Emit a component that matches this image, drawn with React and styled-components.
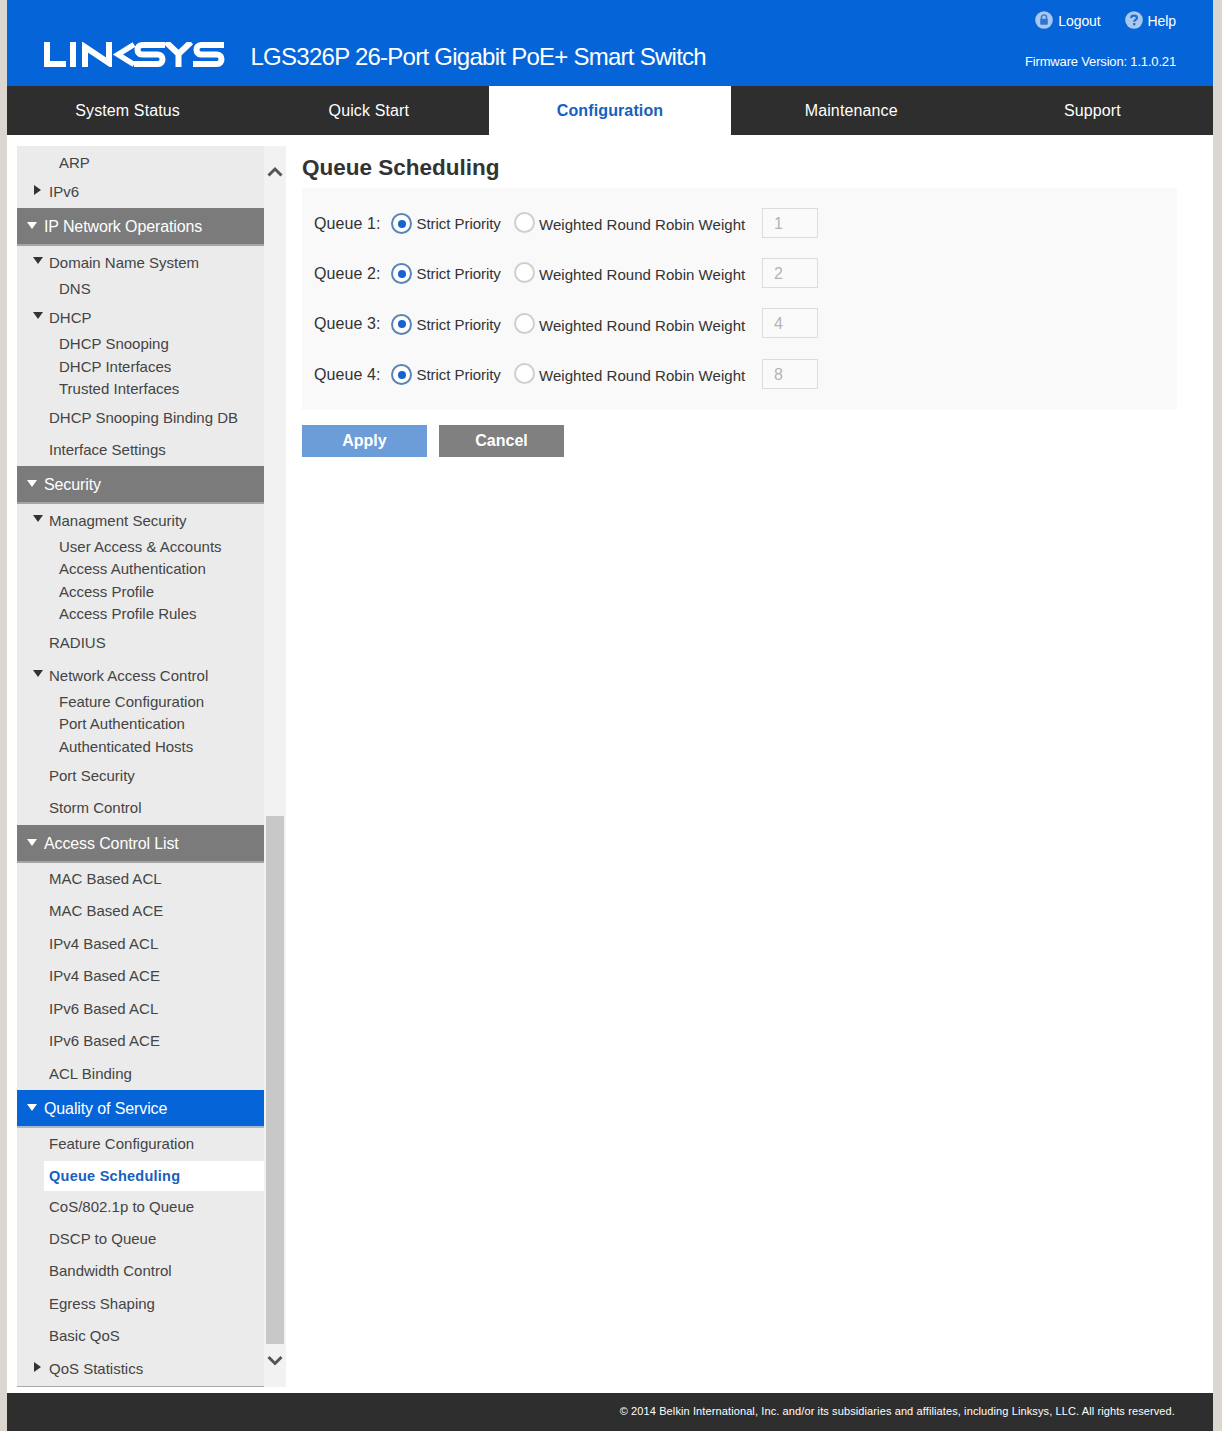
import React from "react";
import styled, { createGlobalStyle } from "styled-components";

const GlobalStyle = createGlobalStyle`
  html, body {
    margin: 0;
    padding: 0;
    background: #dbd7d0;
  }
  body {
    font-family: "Liberation Sans", Arial, sans-serif;
    color: #333;
  }
  * {
    box-sizing: border-box;
  }
`;

const tabs = ["System Status", "Quick Start", "Configuration", "Maintenance", "Support"];

// h = row height when it isn't the default, mt/mb nudge the rows around it
const menu = [
  { type: "sub", label: "ARP", h: 32 },
  { type: "leaf", label: "IPv6", arrow: "right", h: 26, mb: 4 },
  { type: "head", label: "IP Network Operations" },
  { type: "leaf", label: "Domain Name System", arrow: "down" },
  { type: "sub", label: "DNS", mt: -1, mb: 1 },
  { type: "leaf", label: "DHCP", arrow: "down" },
  { type: "sub", label: "DHCP Snooping", mt: -1 },
  { type: "sub", label: "DHCP Interfaces" },
  { type: "sub", label: "Trusted Interfaces", mb: 1 },
  { type: "leaf", label: "DHCP Snooping Binding DB" },
  { type: "leaf", label: "Interface Settings" },
  { type: "head", label: "Security" },
  { type: "leaf", label: "Managment Security", arrow: "down" },
  { type: "sub", label: "User Access & Accounts", mt: -1.5 },
  { type: "sub", label: "Access Authentication" },
  { type: "sub", label: "Access Profile" },
  { type: "sub", label: "Access Profile Rules", mb: 1 },
  { type: "leaf", label: "RADIUS", mb: 0.5 },
  { type: "leaf", label: "Network Access Control", arrow: "down" },
  { type: "sub", label: "Feature Configuration", mt: -1.5 },
  { type: "sub", label: "Port Authentication" },
  { type: "sub", label: "Authenticated Hosts", mb: 1.5 },
  { type: "leaf", label: "Port Security" },
  { type: "leaf", label: "Storm Control", mb: 1 },
  { type: "head", label: "Access Control List" },
  { type: "leaf", label: "MAC Based ACL", mt: -1 },
  { type: "leaf", label: "MAC Based ACE" },
  { type: "leaf", label: "IPv4 Based ACL" },
  { type: "leaf", label: "IPv4 Based ACE" },
  { type: "leaf", label: "IPv6 Based ACL" },
  { type: "leaf", label: "IPv6 Based ACE" },
  { type: "leaf", label: "ACL Binding", mb: 0.5 },
  { type: "head", label: "Quality of Service", active: true },
  { type: "leaf", label: "Feature Configuration", mt: -1, mb: 1.5 },
  { type: "leaf", label: "Queue Scheduling", current: true, h: 30 },
  { type: "leaf", label: "CoS/802.1p to Queue", h: 31 },
  { type: "leaf", label: "DSCP to Queue" },
  { type: "leaf", label: "Bandwidth Control" },
  { type: "leaf", label: "Egress Shaping" },
  { type: "leaf", label: "Basic QoS" },
  { type: "leaf", label: "QoS Statistics", arrow: "right" },
];

const queues = [
  { id: 1, weight: 1 },
  { id: 2, weight: 2 },
  { id: 3, weight: 4 },
  { id: 4, weight: 8 },
];

const LinksysLogo = () => (
  <LogoSvg viewBox="0 0 182 25" role="img" aria-label="Linksys">
    <g fill="none" stroke="#fff" strokeWidth="6">
      <path d="M3 0V22H22" />
      <path d="M29 0V25" />
      <path d="M41 25V5L65 21V0" />
      <path d="M90 2.500L74 12.500L90 22.500" strokeWidth="5.500" />
      <path d="M121 3H98C92 3 92 12.500 98 12.500H114C120 12.500 120 22 114 22H90" />
      <path d="M122 0L134.500 12L147 0M134.500 12V25" />
      <path d="M180 3H157C151 3 151 12.500 157 12.500H173C179 12.500 179 22 173 22H149" />
    </g>
  </LogoSvg>
);

const LockIcon = () => (
  <svg width="18" height="18" viewBox="0 0 19 19">
    <circle cx="9.500" cy="9.500" r="9.300" fill="#a9c8ee" />
    <path d="M6.800 8.500V6.800A2.700 2.700 0 0 1 12.200 6.800V8.500" fill="none" stroke="#2f76d4" strokeWidth="1.500" />
    <rect x="5.500" y="8.200" width="8" height="6.300" rx="0.800" fill="#2f76d4" />
  </svg>
);

const HelpIcon = () => (
  <svg width="18" height="18" viewBox="0 0 19 19">
    <circle cx="9.500" cy="9.500" r="9.300" fill="#a9c8ee" />
    <path d="M6.500 7.300C6.500 4 12.600 4 12.600 7.300C12.600 9.400 9.700 9.300 9.700 11.400" fill="none" stroke="#1f6cd2" strokeWidth="2.300" />
    <rect x="8.500" y="12.700" width="2.400" height="2.400" fill="#1f6cd2" />
  </svg>
);

const Chevron = ({ up }) => (
  <svg width="16" height="11" viewBox="0 0 16 11">
    <path d={up ? "M1.500 9.500L8 3L14.500 9.500" : "M1.500 2L8 8.500L14.500 2"} fill="none" stroke="#555" strokeWidth="3" />
  </svg>
);

const App = () => {
  return (
    <Page>
      <GlobalStyle />
      <Header>
        <Brand>
          <LinksysLogo />
          <ProductName>LGS326P 26-Port Gigabit PoE+ Smart Switch</ProductName>
        </Brand>
        <HeaderRight>
          <UserLinks>
            <UserLink>
              <LockIcon />
              Logout
            </UserLink>
            <UserLink>
              <HelpIcon />
              Help
            </UserLink>
          </UserLinks>
          <Firmware>Firmware Version: 1.1.0.21</Firmware>
        </HeaderRight>
      </Header>

      <Nav>
        {tabs.map((tab) => (
          <NavTab key={tab} $active={tab === "Configuration"}>
            {tab}
          </NavTab>
        ))}
      </Nav>

      <Body>
        <SidePane>
          <Menu>
            {menu.map((item, index) => {
              if (item.type === "head") {
                return (
                  <MenuHead key={index} $active={item.active}>
                    <HeadArrow />
                    {item.label}
                  </MenuHead>
                );
              }
              return (
                <MenuRow
                  key={index}
                  $sub={item.type === "sub"}
                  $h={item.h}
                  $mt={item.mt}
                  $mb={item.mb}
                >
                  {item.arrow && <RowArrow $dir={item.arrow} />}
                  {item.current ? <CurrentLabel>{item.label}</CurrentLabel> : item.label}
                </MenuRow>
              );
            })}
          </Menu>
          <ScrollTrack>
            <ScrollTop>
              <Chevron up />
            </ScrollTop>
            <ScrollThumb />
            <ScrollBottom>
              <Chevron />
            </ScrollBottom>
          </ScrollTrack>
        </SidePane>

        <Content>
          <Title>Queue Scheduling</Title>
          <FormPanel>
            {queues.map((queue) => (
              <QueueRow key={queue.id}>
                <QueueLabel>Queue {queue.id}:</QueueLabel>
                <Radio $checked />
                <StrictLabel>Strict Priority</StrictLabel>
                <Radio />
                <WeightLabel>Weighted Round Robin Weight</WeightLabel>
                <WeightBox>{queue.weight}</WeightBox>
              </QueueRow>
            ))}
          </FormPanel>
          <Buttons>
            <Button $color="#6d9dd8">Apply</Button>
            <Button $color="#808080">Cancel</Button>
          </Buttons>
        </Content>
      </Body>

      <Footer>© 2014 Belkin International, Inc. and/or its subsidiaries and affiliates, including Linksys, LLC. All rights reserved.</Footer>
    </Page>
  );
};

const Page = styled.div`
  width: 1206px;
  height: 1431px;
  margin-left: 7px;
  background: #fff;
  display: flex;
  flex-direction: column;
`;

const Header = styled.header`
  height: 86px;
  background: #0564d8;
  color: #fff;
  display: flex;
  justify-content: space-between;
  padding: 0 37px;
`;

const Brand = styled.div`
  display: flex;
  align-items: flex-start;
  padding-top: 42px;
`;

const LogoSvg = styled.svg`
  width: 182px;
  height: 25px;
  margin-right: 24.500px;
`;

const ProductName = styled.div`
  font-size: 24px;
  line-height: 30px;
  letter-spacing: -0.74px;
`;

const HeaderRight = styled.div`
  display: flex;
  flex-direction: column;
  align-items: flex-end;
`;

const UserLinks = styled.div`
  display: flex;
  gap: 24px;
  padding-top: 11px;
  height: 42px;
`;

const UserLink = styled.div`
  display: flex;
  align-items: flex-start;
  gap: 5px;
  font-size: 14px;
  line-height: 20px;
  letter-spacing: -0.1px;
`;

const Firmware = styled.div`
  font-size: 13px;
  line-height: 16px;
  margin-top: 12px;
  letter-spacing: -0.17px;
`;

const Nav = styled.nav`
  height: 49px;
  background: #2e2e2e;
  display: grid;
  grid-template-columns: repeat(5, 1fr);
`;

const NavTab = styled.div`
  display: flex;
  align-items: center;
  justify-content: center;
  font-size: 16px;
  letter-spacing: 0.12px;
  font-weight: ${(p) => (p.$active ? "bold" : "normal")};
  background: ${(p) => (p.$active ? "#fff" : "transparent")};
  color: ${(p) => (p.$active ? "#1660c0" : "#fff")};
`;

const Body = styled.main`
  flex: 1;
  display: flex;
  align-items: flex-start;
  padding: 11px 0 0 10px;
`;

const SidePane = styled.aside`
  width: 269px;
  height: 1241px;
  display: flex;
  flex-shrink: 0;
`;

const Menu = styled.div`
  width: 247px;
  height: 1241px;
  overflow: hidden;
  background: #ebebeb;
  border-bottom: 1px solid #a8a8a8;
`;

const MenuHead = styled.div`
  height: 38px;
  display: flex;
  align-items: center;
  padding: 1px 0 0 10px;
  font-size: 16px;
  letter-spacing: -0.12px;
  color: #fff;
  background: ${(p) => (p.$active ? "#0564d8" : "#7b7b7b")};
  border-bottom: 2px solid ${(p) => (p.$active ? "#a9b9cc" : "#a5a5a5")};
`;

const HeadArrow = styled.span`
  width: 0;
  height: 0;
  margin: -2px 7px 0 0;
  border-left: 5px solid transparent;
  border-right: 5px solid transparent;
  border-top: 7px solid #fff;
`;

const MenuRow = styled.div`
  position: relative;
  height: ${(p) => (p.$h ? `${p.$h}px` : p.$sub ? "22.5px" : "32.5px")};
  margin-top: ${(p) => p.$mt || 0}px;
  margin-bottom: ${(p) => p.$mb || 0}px;
  display: flex;
  align-items: center;
  padding-left: ${(p) => (p.$sub ? "42px" : "32px")};
  font-size: 15px;
  white-space: nowrap;
  color: #444;
`;

const CurrentLabel = styled.div`
  align-self: stretch;
  flex: 1;
  display: flex;
  align-items: center;
  margin-left: -5px;
  padding-left: 5px;
  background: #fff;
  color: #1660c0;
  font-weight: bold;
  font-size: 14.500px;
  letter-spacing: 0.25px;
`;

const RowArrow = styled.span`
  position: absolute;
  width: 0;
  height: 0;
  ${(p) =>
    p.$dir === "down"
      ? `
    left: 16px;
    top: calc(50% - 5px);
    border-left: 5px solid transparent;
    border-right: 5px solid transparent;
    border-top: 7px solid #333;
  `
      : `
    left: 17px;
    top: calc(50% - 6px);
    border-top: 5px solid transparent;
    border-bottom: 5px solid transparent;
    border-left: 7px solid #333;
  `}
`;

const ScrollTrack = styled.div`
  width: 22px;
  display: flex;
  flex-direction: column;
  background: #f2f2f2;
`;

const ScrollTop = styled.div`
  height: 670px;
  padding: 17px 0 0 3px;
`;

const ScrollThumb = styled.div`
  width: 18px;
  height: 528px;
  margin-left: 2px;
  background: #c8c8c8;
`;

const ScrollBottom = styled.div`
  flex: 1;
  padding: 8px 0 0 3px;
`;

const Content = styled.section`
  width: 875px;
  margin-left: 16px;
`;

const Title = styled.h1`
  margin: 0;
  height: 42px;
  font-size: 22.500px;
  line-height: 43px;
  font-weight: bold;
  color: #333;
`;

const FormPanel = styled.div`
  height: 222px;
  background: #f9f9f9;
  padding-top: 9.500px;
  padding-left: 12px;
`;

const QueueRow = styled.div`
  height: 50.300px;
  display: flex;
  align-items: center;
  color: #333;
`;

const QueueLabel = styled.span`
  width: 77px;
  padding-top: 2px;
  font-size: 16px;
  letter-spacing: 0.1px;
`;

const Radio = styled.span`
  width: 21px;
  height: 21px;
  flex-shrink: 0;
  margin-top: ${(p) => (p.$checked ? "2px" : "0")};
  border-radius: 50%;
  display: flex;
  align-items: center;
  justify-content: center;
  background: #fff;
  border: 2px solid ${(p) => (p.$checked ? "#5a84b8" : "#cfcfcf")};
  &::after {
    content: "";
    width: 8px;
    height: 8px;
    border-radius: 50%;
    background: ${(p) => (p.$checked ? "#1565d0" : "transparent")};
  }
`;

const StrictLabel = styled.span`
  width: 102px;
  padding-left: 4.500px;
  padding-top: 2px;
  font-size: 15px;
  letter-spacing: -0.05px;
`;

const WeightLabel = styled.span`
  width: 227px;
  padding-left: 4px;
  padding-top: 4px;
  font-size: 15px;
  letter-spacing: 0.03px;
`;

const WeightBox = styled.span`
  width: 56px;
  height: 30px;
  display: flex;
  align-items: center;
  padding-left: 11px;
  padding-top: 2px;
  font-size: 16px;
  color: #b4b4b4;
  border: 1px solid #dcdcdc;
  background: #fafafa;
`;

const Buttons = styled.div`
  display: flex;
  gap: 12px;
  margin-top: 15px;
`;

const Button = styled.div`
  width: 125px;
  height: 32px;
  display: flex;
  align-items: center;
  justify-content: center;
  font-size: 16px;
  font-weight: bold;
  color: #fff;
  background: ${(p) => p.$color};
`;

const Footer = styled.footer`
  height: 38px;
  background: #2e2e2e;
  color: #fff;
  display: flex;
  align-items: center;
  justify-content: flex-end;
  padding: 0 38px 2px 0;
  font-size: 11px;
  letter-spacing: 0.11px;
`;

export default App;
